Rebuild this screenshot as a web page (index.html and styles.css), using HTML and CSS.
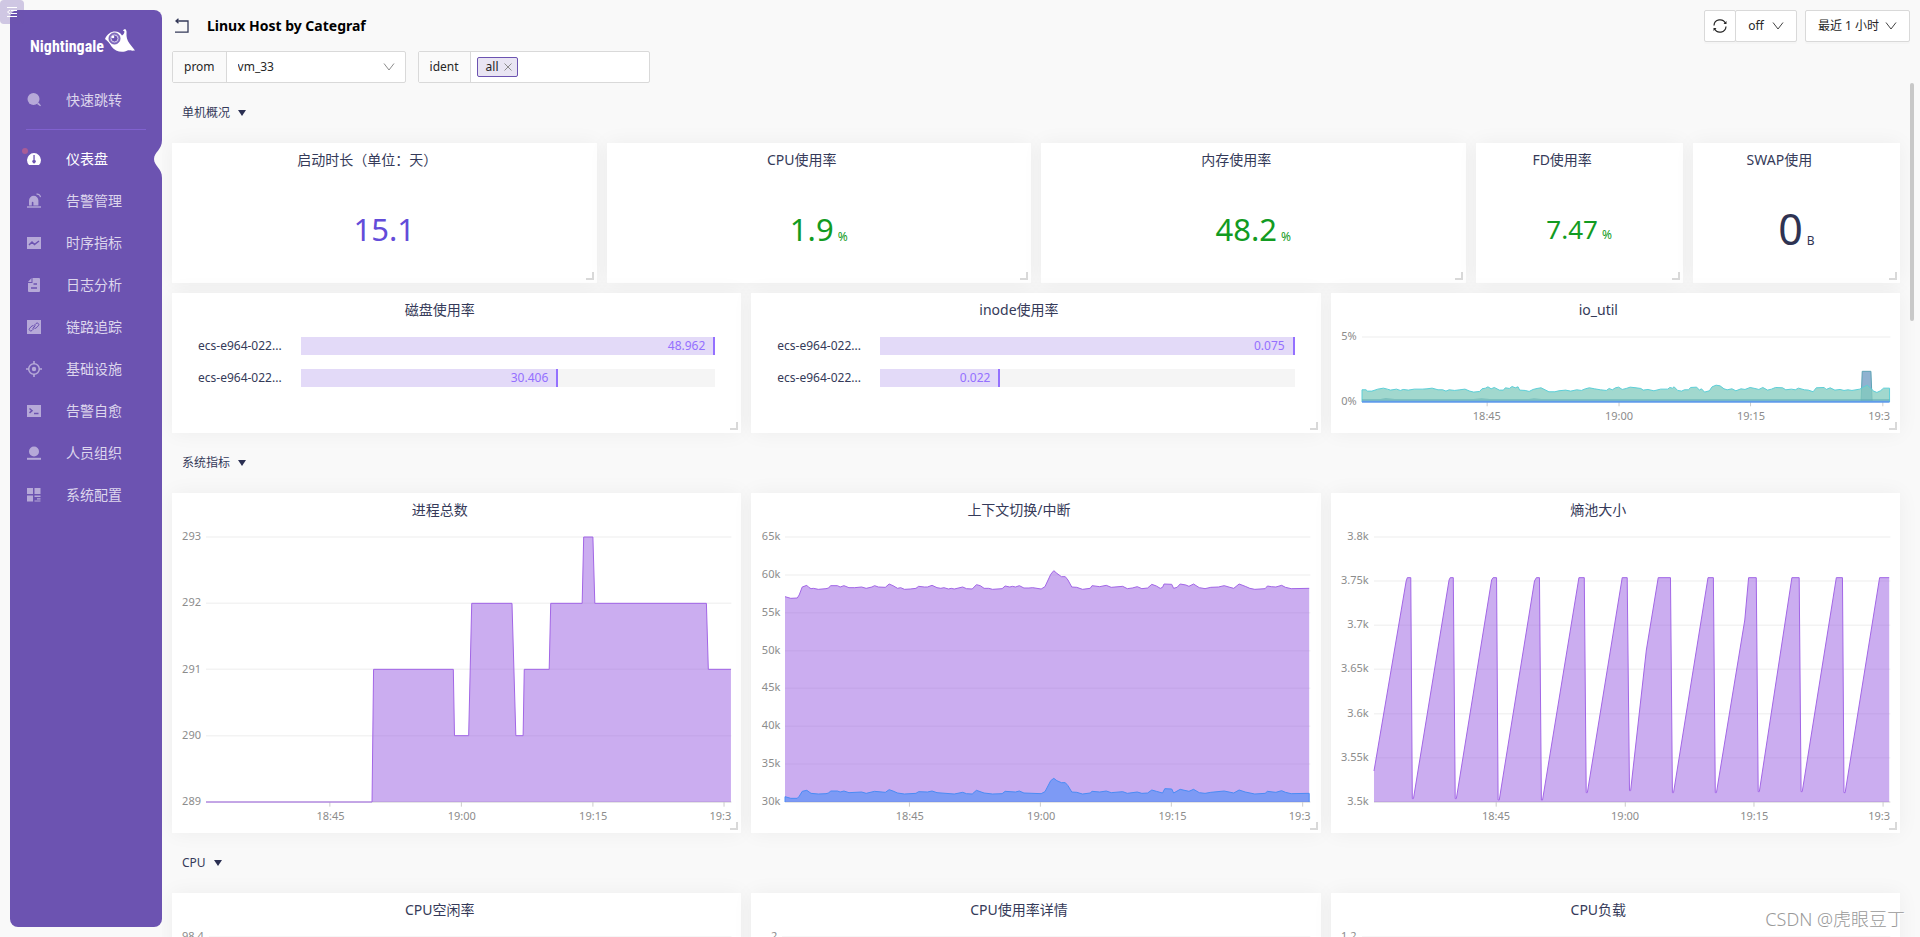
FILE: index.html
```html
<!DOCTYPE html>
<html lang="zh-CN">
<head>
<meta charset="utf-8">
<title>Linux Host by Categraf</title>
<link rel="stylesheet" href="styles.css">
</head>
<body>
<div class="app">
  <aside class="sidebar">
    <div class="logo">
      <span class="logo-text">Nightingale</span>
      <svg class="logo-bird" width="30" height="24" viewBox="0 0 30 24">
        <path fill="#fff" d="M0 10 C2 5 6 2.500 10 2.500 C13 2.500 15.500 4 17 6.500 C18.500 5.500 19.500 4 19.500 2.500 L17.800 1.200 L20 0 C21.500 1 21.800 2.500 21.500 4.500 C21.300 8 22 11 24.500 14.500 L30 21.500 C26 22 24 21 22.500 21.500 C18 24 10 23 6.500 17.500 C5 15 3 12 0 10Z"/>
        <circle cx="9.500" cy="9.500" r="5.500" fill="#8d7ac6" stroke="#6c53b1"/>
        <circle cx="9.500" cy="9.500" r="3.500" fill="#6c53b1" stroke="#d5cdeb"/>
        <circle cx="8" cy="8" r="1.300" fill="#fff"/>
      </svg>
    </div>
    <nav class="nav">
      <a class="nav-item" href="#search"><svg class="ico" viewBox="0 0 16 16"><circle cx="7.500" cy="7" r="6"/><path d="M11 12l1.500-1.500 2.500 3-.8.8z"/></svg>快速跳转</a>
      <hr class="nav-line">
      <a class="nav-item active" href="#dashboards"><svg class="ico" viewBox="0 0 16 16"><path fill-rule="evenodd" d="M3 14A7 7 0 1 1 13 14Z M7.400 4v5a1.700 1.700 0 1 0 1.300 0V4z"/></svg>仪表盘<i class="dot"></i>
        <svg class="notch" width="8" height="38" viewBox="0 0 8 38"><path d="M8 0C8 10 0 12 0 19S8 28 8 38Z"/></svg></a>
      <a class="nav-item" href="#alerts"><svg class="ico" viewBox="0 0 16 16"><path fill-rule="evenodd" d="M3 12.500V7.500a4.700 4.700 0 0 1 9.400 0V12.500H7.400V9.500a.8 .8 0 0 0-1.600 0V12.500z"/><path d="M1 13.300h14v1.400H1z"/><path d="M10.500 1.200c2-.4 3.700 1 4 3" fill="none" stroke="#fff" stroke-width="1.200"/></svg>告警管理</a>
      <a class="nav-item" href="#metrics"><svg class="ico" viewBox="0 0 16 16"><path d="M1 2h14v12H1z"/><path class="cut" d="M3 10l3-3 2.500 2.500L13 6"/></svg>时序指标</a>
      <a class="nav-item" href="#logs"><svg class="ico" viewBox="0 0 16 16"><path d="M6.500 1H13a1 1 0 0 1 1 1v12a1 1 0 0 1-1 1H3a1 1 0 0 1-1-1V6h4.500zM5.500 1v4H2z"/><path class="cut" d="M7.500 7H11M5 11h6"/></svg>日志分析</a>
      <a class="nav-item" href="#trace"><svg class="ico" viewBox="0 0 16 16"><path d="M1 1h14v14H1z"/><path class="cut thin" d="M7 7.500l3-3a1.600 1.600 0 0 1 2.300 2.300l-3 3M9 8.500l-3 3a1.600 1.600 0 0 1-2.300-2.300l3-3M6.500 9.500l3-3"/></svg>链路追踪</a>
      <a class="nav-item" href="#infra"><svg class="ico" viewBox="0 0 16 16"><circle cx="8" cy="8" r="5.300" fill="none" stroke="#fff" stroke-width="1.500"/><circle cx="8" cy="8" r="2.200"/><path d="M7.200 0h1.600v3H7.200zM7.200 13h1.600v3H7.200zM0 7.200h3v1.600H0zM13 7.200h3v1.600h-3z"/></svg>基础设施</a>
      <a class="nav-item" href="#healing"><svg class="ico" viewBox="0 0 16 16"><path d="M1 2h14v12H1z"/><path class="cut" d="M3.500 5.500l2.500 2.200-2.500 2.200M8 10.500h4.500"/></svg>告警自愈</a>
      <a class="nav-item" href="#users"><svg class="ico" viewBox="0 0 16 16"><circle cx="8" cy="6.500" r="5"/><path d="M1 12.800h14v2H1z"/></svg>人员组织</a>
      <a class="nav-item" href="#system"><svg class="ico" viewBox="0 0 16 16"><path d="M1 1h6v6H1zM8.500 1h6v6h-6zM1 8.500h6v6H1zM8.500 8.500h6V10h-6zM11 11.200h3.500v1.200H11zM8.500 13.400h6v1.200h-6z"/></svg>系统配置</a>
    </nav>
  </aside>
  <button class="collapse" aria-label="menu"><svg width="12" height="12" viewBox="0 0 12 12"><path d="M1 1.500h10M5 4.500h6M5 7.500h6M1 10.500h10M4 4L1.500 6 4 8" fill="none" stroke="#fff"/></svg></button>

  <main class="main">
    <header class="top">
      <button class="back" aria-label="返回"><svg width="16" height="16" viewBox="0 0 16 16"><path d="M2.500 3H14v11.200H1M4.500 .8L2 3l2.500 2.200" fill="none" stroke="#353a59" stroke-width="1.300"/></svg></button>
      <h1>Linux Host by Categraf</h1>
      <div class="btn-group">
        <button class="btn icon-btn" aria-label="刷新"><svg width="16" height="16" viewBox="0 0 16 16" fill="none" stroke="#262626" stroke-width="1.200"><path d="M2 7.500A6 6 0 0 1 13.500 5.500M14 8.500A6 6 0 0 1 2.500 10.500"/><path d="M14.500 3v3h-3zM1.500 13v-3h3z" fill="#262626" stroke="none"/></svg></button>
        <button class="btn">off<svg class="chev" viewBox="0 0 12 12"><path d="M1 2.500l5 6.500 5-6.500"/></svg></button>
      </div>
      <button class="btn range">最近 1 小时<svg class="chev" viewBox="0 0 12 12"><path d="M1 2.500l5 6.500 5-6.500"/></svg></button>
    </header>

    <form class="filters">
      <div class="field">
        <label for="prom">prom</label>
        <div class="control"><select id="prom"><option>vm_33</option></select><svg class="chev light" viewBox="0 0 12 12"><path d="M1 2.500l5 6.500 5-6.500"/></svg></div>
      </div>
      <div class="field">
        <label for="ident">ident</label>
        <div class="control tags"><span class="tag">all<button type="button" aria-label="移除"><svg width="8" height="8" viewBox="0 0 8 8"><path d="M.5 .5l7 7M7.500 .5l-7 7" stroke="#8c8c8c"/></svg></button></span><input id="ident" type="text"></div>
      </div>
    </form>

    <div class="scroll">
      <div class="grid">
        <button class="section">单机概况<i></i></button>

        <section class="card w6"><h2>启动时长（单位：天）</h2><div class="stat violet"><b>15.1</b></div></section>
        <section class="card w6"><h2>CPU使用率</h2><div class="stat green"><b>1.9</b><small>%</small></div></section>
        <section class="card w6"><h2>内存使用率</h2><div class="stat green"><b>48.2</b><small>%</small></div></section>
        <section class="card w3"><h2>FD使用率</h2><div class="stat green mid"><b>7.47</b><small>%</small></div></section>
        <section class="card w3"><h2>SWAP使用</h2><div class="stat big"><b>0</b><small>B</small></div></section>

        <section class="card w8"><h2>磁盘使用率</h2>
          <div class="bars">
            <span>ecs-e964-022...</span><div class="track"><div class="fill" style="width:100%">48.962</div></div>
            <span>ecs-e964-022...</span><div class="track"><div class="fill" style="width:62.1%">30.406</div></div>
          </div>
        </section>
        <section class="card w8"><h2>inode使用率</h2>
          <div class="bars">
            <span>ecs-e964-022...</span><div class="track"><div class="fill" style="width:100%">0.075</div></div>
            <span>ecs-e964-022...</span><div class="track"><div class="fill" style="width:29%">0.022</div></div>
          </div>
        </section>
        <section class="card w8"><h2>io_util</h2>
          <div class="chart y-xs">
            <div class="yaxis"><span>5%</span><span>0%</span></div>
            <svg class="plot" viewBox="158 171 1334 197" preserveAspectRatio="none">
              <path class="gridline" d="M158 171H1492"/>
              <path class="tick" d="M474 368v13M807 368v13M1139 368v13M1473 368v13"/>
              <path class="spike" d="M1418 368L1421 275H1443L1446 368"/>
              <path class="teal-area" d="M158 368V331L168 331L172 335L183 335L198 329L212 326L222 329L230 332L245 329L255 333L262 330L275 332L290 329L310 329L322 328L335 326L350 331L362 331L370 335L378 331L392 333L405 331L418 329L430 335L440 338L455 336L461 328L470 326L476 322L484 328L492 324L505 332L515 332L520 325L530 327L537 321L545 325L552 322L556 332L570 333L580 336L590 330L600 327L610 325L620 331L630 337L645 337L655 334L672 332L685 335L700 331L712 333L722 328L732 325L745 328L760 331L775 333L782 327L790 331L798 325L806 323L815 330L825 327L835 323L850 325L862 327L868 332L880 330L895 334L912 329L930 329L935 324L942 326L946 322L955 333L965 335L972 331L982 331L988 324L1003 323L1010 332L1015 328L1023 338L1035 334L1042 322L1052 317L1062 319L1072 328L1080 331L1092 328L1102 334L1115 328L1125 330L1138 324L1150 327L1160 330L1170 324L1182 332L1192 329L1202 324L1220 325L1228 331L1242 329L1252 331L1260 326L1275 331L1285 332L1297 337L1305 325L1325 324L1330 330L1340 325L1352 332L1365 330L1375 333L1385 331L1395 333L1415 329L1425 322L1434 317L1442 326L1450 335L1458 339L1467 334L1475 326L1490 326V368"/>
              <path class="teal-low" d="M158 368V359L205 359L218 356L240 359L440 359L460 357L480 359L580 359L592 357L610 359H1490V368"/>
              <path class="base-blue" d="M158 367H1490"/>
            </svg>
            <div class="xaxis"><i></i><span>18:45</span><span>19:00</span><span>19:15</span><span>19:3</span></div>
          </div>
        </section>

        <button class="section">系统指标<i></i></button>

        <section class="card tall w8"><h2>进程总数</h2>
          <div class="chart y-s">
            <div class="yaxis"><span>293</span><span>292</span><span>291</span><span>290</span><span>289</span></div>
            <svg class="plot" viewBox="122 171 1370 795" preserveAspectRatio="none">
              <path class="gridline" d="M122 171H1492M122 370H1492M122 568H1492M122 767H1492"/>
              <path class="axis" d="M122 966H1492"/><path class="tick" d="M445 966v14M788 966v14M1131 966v14M1473 966v14"/>
              <path class="violet-area" d="M122 966H555L559 568H767L770 767H807L815 370H920L930 767H949L952 568H1017L1021 370H1103L1107 171H1131L1136 370H1427L1432 568H1491V966"/>
              <path class="violet-line" d="M122 966H555L559 568H767L770 767H807L815 370H920L930 767H949L952 568H1017L1021 370H1103L1107 171H1131L1136 370H1427L1432 568H1491"/>
            </svg>
            <div class="xaxis"><i></i><span>18:45</span><span>19:00</span><span>19:15</span><span>19:3</span></div>
          </div>
        </section>
        <section class="card tall w8"><h2>上下文切换/中断</h2>
          <div class="chart y-s">
            <div class="yaxis"><span>65k</span><span>60k</span><span>55k</span><span>50k</span><span>45k</span><span>40k</span><span>35k</span><span>30k</span></div>
            <svg class="plot" viewBox="118 171 1372 795" preserveAspectRatio="none">
              <path class="gridline" d="M118 171H1490M118 285H1490M118 398H1490M118 512H1490M118 625H1490M118 739H1490M118 852H1490"/>
              <path class="axis" d="M118 966H1490"/><path class="tick" d="M443 966v14M785 966v14M1127 966v14M1470 966v14"/>
              <path class="violet-area" d="M118 966V350L133 355L150 354L155 345L163 321L175 316L180 322L186 326L192 325L205 328L225 326L232 324L237 317L255 317L262 321L272 317L285 323L300 323L318 321L330 325L345 321L352 317L362 321L380 322L390 312L400 317L412 325L420 323L430 328L445 327L460 325L467 319L482 321L490 321L502 316L515 323L525 325L533 323L545 327L552 325L560 327L582 321L592 326L607 327L618 314L628 317L638 325L650 325L660 328L685 326L693 318L705 321L712 319L720 321L730 317L742 324L755 324L765 323L787 327L797 320L812 283L820 272L828 280L840 290L850 290L857 300L867 321L880 322L895 328L915 325L920 317L940 320L957 316L970 322L1000 319L1012 326L1025 324L1038 320L1050 326L1065 324L1076 313L1088 318L1098 325L1104 322L1108 312L1128 313L1133 325L1142 322L1150 312L1165 315L1173 319L1185 312L1200 323L1215 326L1230 322L1250 321L1265 317L1280 322L1290 325L1304 312L1320 319L1332 325L1345 328L1372 326L1378 318L1388 320L1400 321L1415 316L1425 322L1440 326L1487 325V966"/>
              <path class="violet-line" d="M118 350L133 355L150 354L155 345L163 321L175 316L180 322L186 326L192 325L205 328L225 326L232 324L237 317L255 317L262 321L272 317L285 323L300 323L318 321L330 325L345 321L352 317L362 321L380 322L390 312L400 317L412 325L420 323L430 328L445 327L460 325L467 319L482 321L490 321L502 316L515 323L525 325L533 323L545 327L552 325L560 327L582 321L592 326L607 327L618 314L628 317L638 325L650 325L660 328L685 326L693 318L705 321L712 319L720 321L730 317L742 324L755 324L765 323L787 327L797 320L812 283L820 272L828 280L840 290L850 290L857 300L867 321L880 322L895 328L915 325L920 317L940 320L957 316L970 322L1000 319L1012 326L1025 324L1038 320L1050 326L1065 324L1076 313L1088 318L1098 325L1104 322L1108 312L1128 313L1133 325L1142 322L1150 312L1165 315L1173 319L1185 312L1200 323L1215 326L1230 322L1250 321L1265 317L1280 322L1290 325L1304 312L1320 319L1332 325L1345 328L1372 326L1378 318L1388 320L1400 321L1415 316L1425 322L1440 326L1487 325"/>
              <path class="blue-area" d="M118 966V950L133 955L150 955L155 949L163 934L175 931L186 940L205 942L225 941L232 939L237 933L255 933L262 936L272 933L285 938L318 936L330 940L352 934L380 937L390 929L400 933L412 939L430 942L460 940L467 935L490 936L502 933L515 938L560 942L582 937L592 941L607 942L618 931L638 939L660 942L685 941L693 934L720 936L730 933L742 939L787 941L797 935L812 902L820 895L828 902L840 908L850 908L857 917L867 936L880 937L895 942L915 939L920 934L940 936L957 933L970 938L1000 935L1012 940L1038 936L1050 940L1065 939L1076 930L1088 934L1104 939L1110 926L1128 927L1133 939L1150 928L1173 934L1185 928L1200 938L1215 940L1230 937L1265 933L1290 939L1304 930L1320 936L1345 942L1372 940L1378 934L1400 937L1415 932L1425 937L1440 941L1487 940V966"/>
            </svg>
            <div class="xaxis"><i></i><span>18:45</span><span>19:00</span><span>19:15</span><span>19:3</span></div>
          </div>
        </section>
        <section class="card tall w8"><h2>熵池大小</h2>
          <div class="chart y-m">
            <div class="yaxis"><span>3.8k</span><span>3.75k</span><span>3.7k</span><span>3.65k</span><span>3.6k</span><span>3.55k</span><span>3.5k</span></div>
            <svg class="plot" viewBox="142 171 1348 795" preserveAspectRatio="none">
              <path class="gridline" d="M142 171H1490M142 303H1490M142 436H1490M142 568H1490M142 701H1490M142 833H1490"/>
              <path class="axis" d="M142 966H1490"/><path class="tick" d="M461 966v14M798 966v14M1134 966v14M1471 966v14"/>
              <path class="violet-area" d="M142 966V873L226 303L229 293H238L242 956H245L338 300L341 293H349L354 956H357L449 300L453 293H462L466 960H469L561 303L566 293H574L579 960H582L677 293H691L696 938H699L790 293H803L809 932H812L853 510L884 293H916L921 938H924L1014 293H1028L1033 938H1036L1110 420L1120 293H1140L1145 935H1148L1233 293H1252L1257 935H1260L1349 293H1365L1369 938H1372L1462 293H1487V966"/>
              <path class="violet-line" d="M142 873L226 303L229 293H238L242 956H245L338 300L341 293H349L354 956H357L449 300L453 293H462L466 960H469L561 303L566 293H574L579 960H582L677 293H691L696 938H699L790 293H803L809 932H812L853 510L884 293H916L921 938H924L1014 293H1028L1033 938H1036L1110 420L1120 293H1140L1145 935H1148L1233 293H1252L1257 935H1260L1349 293H1365L1369 938H1372L1462 293H1487"/>
            </svg>
            <div class="xaxis"><i></i><span>18:45</span><span>19:00</span><span>19:15</span><span>19:3</span></div>
          </div>
        </section>

        <button class="section">CPU<i></i></button>

        <section class="card tall w8"><h2>CPU空闲率</h2>
          <div class="chart y-s"><div class="yaxis"><span>98.4</span></div><svg class="plot" viewBox="0 0 100 100" preserveAspectRatio="none"><path class="gridline" d="M0 0H100"/></svg></div>
        </section>
        <section class="card tall w8"><h2>CPU使用率详情</h2>
          <div class="chart y-xs"><div class="yaxis"><span>2</span></div><svg class="plot" viewBox="0 0 100 100" preserveAspectRatio="none"><path class="gridline" d="M0 0H100"/></svg></div>
        </section>
        <section class="card tall w8"><h2>CPU负载</h2>
          <div class="chart y-xs"><div class="yaxis"><span>1.2</span></div><svg class="plot" viewBox="0 0 100 100" preserveAspectRatio="none"><path class="gridline" d="M0 0H100"/></svg></div>
        </section>
      </div>
    </div>
    <div class="thumb"></div>
  </main>
  <div class="watermark">CSDN @虎眼豆丁</div>
</div>
</body>
</html>
```
FILE: styles.css
```css
* { box-sizing: border-box; }
body {
  margin: 0;
  background: #f9f9f9;
  color: #262626;
  font: 12px/20px "Noto Sans", "Noto Sans CJK SC", sans-serif;
}
button, input, select { font: inherit; color: inherit; margin: 0; padding: 0; border: 0; background: none; }
h1, h2 { margin: 0; }
.app { position: relative; display: flex; height: 100vh; overflow: hidden; }

/* sidebar */
.sidebar {
  flex: none;
  width: 152px;
  margin: 10px 0 10px 10px;
  border-radius: 8px;
  background: #6c53b1;
}
.logo { display: flex; align-items: flex-start; height: 69px; padding: 19px 0 0 20px; gap: 4px; color: #fff; }
.logo-text { width: 71px; padding-top: 6px; font: bold 16px/24px "Roboto Condensed", "Open Sans Condensed", "Liberation Sans Narrow", sans-serif; }
.logo-bird { flex: none; }
.nav-item {
  position: relative;
  display: flex;
  align-items: center;
  gap: 24px;
  height: 42px;
  padding-left: 16px;
  color: #ddd6ed;
  font-size: 14px;
  text-decoration: none;
}
.nav-item.active { color: #fff; }
.ico { width: 16px; height: 16px; fill: #fff; opacity: .5; }
.active .ico { opacity: 1; }
.cut { fill: none; stroke: #6c53b1; stroke-width: 1.5; }
.cut.thin { stroke-width: 1; }
.nav-line { height: 1px; margin: 8px 16px; border: 0; background: #8061cf; }
.dot { position: absolute; left: 12px; top: 10px; width: 6px; height: 6px; border-radius: 50%; background: #a95c97; }
.notch { position: absolute; right: 0; top: 2px; fill: #f9f9f9; }
.collapse {
  position: absolute;
  left: 0;
  top: 0;
  width: 24px;
  height: 24px;
  border-radius: 4px;
  background: rgba(108, 83, 177, .3);
  line-height: 0;
}

/* header */
.main { position: relative; flex: 1; min-width: 0; display: flex; flex-direction: column; }
.top { display: flex; align-items: center; padding: 10px 10px 0; height: 42px; }
.back { width: 20px; height: 20px; line-height: 0; }
h1 { flex: 1; margin-left: 15px; color: #000; font-size: 14px; font-weight: 700; line-height: 20px; }
.btn-group { display: flex; margin-right: 8px; }
.btn {
  display: flex;
  align-items: center;
  justify-content: center;
  gap: 8px;
  height: 32px;
  padding: 0 12px;
  border: 1px solid #d9d9d9;
  border-radius: 2px;
  background: #fff;
  box-shadow: 0 2px 0 rgba(0, 0, 0, .015);
}
.icon-btn { width: 32px; padding: 0; margin-right: -1px; }
.range { gap: 6px; }
.chev { flex: none; width: 12px; height: 12px; fill: none; stroke: #434343; }
.light { stroke: #8c8c8c; }

.filters { display: flex; gap: 12px; padding: 9px 10px 0; }
.field { display: flex; height: 32px; border: 1px solid #d9d9d9; border-radius: 2px; background: #fff; }
.field label { padding: 5px 11px; border-right: 1px solid #d9d9d9; background: #fafafa; }
.control { position: relative; width: 178px; height: 30px; }
.control select { width: 100%; height: 100%; padding: 0 11px; appearance: none; }
.control .chev { position: absolute; right: 10px; top: 9px; }
.tags { display: flex; align-items: center; gap: 4px; padding: 0 6px; }
.tags input { flex: 1; min-width: 0; outline: 0; }
.tag { display: flex; align-items: center; gap: 5px; height: 20px; padding: 0 5px 0 8px; border: 1px solid #6c53b1; border-radius: 2px; background: #e9e5f3; line-height: 18px; }
.tag button { line-height: 0; }

/* dashboard */
.scroll { flex: 1; min-height: 0; overflow: auto; scrollbar-width: none; padding: 10px 20px 10px 10px; }
.grid { display: grid; grid-template-columns: repeat(24, minmax(0, 1fr)); grid-auto-rows: 40px; gap: 10px; }
.section { grid-column: 1 / -1; display: flex; align-items: center; gap: 8px; padding: 0 10px; color: #353a59; }
.section i { border: 4px solid transparent; border-top: 6px solid #2b3052; border-bottom: 0; }
.card {
  position: relative;
  grid-row: span 3;
  display: flex;
  flex-direction: column;
  background: #fff;
  box-shadow: 0 0 20px rgba(0, 0, 0, .05);
}
.tall { grid-row: span 7; }
.w3 { grid-column: span 3; }
.w6 { grid-column: span 6; }
.w8 { grid-column: span 8; }
.card::after {
  content: "";
  position: absolute;
  right: 3px;
  bottom: 3px;
  width: 6px;
  height: 6px;
  border: solid #d9d9d9;
  border-width: 0 2px 2px 0;
}
h2 { height: 34px; padding-right: 34px; color: #353a59; font-size: 14px; font-weight: 400; line-height: 34px; text-align: center; }

.stat { flex: 1; display: flex; align-items: baseline; justify-content: center; gap: 4px; padding-top: 32px; line-height: 40px; color: #2f3352; }
.stat b { font-size: 31px; font-weight: 400; }
.stat small { font-size: 12px; }
.stat.mid b { font-size: 26px; }
.stat.big b { font-size: 43px; }
.stat.violet { color: #634cd9; }
.stat.green { color: #129b22; }

.bars { display: grid; grid-template-columns: 88px 1fr; gap: 14px 15px; padding: 10px 26px; color: #353a59; line-height: 18px; white-space: nowrap; }
.track { background: #f5f5f5; }
.fill { height: 18px; padding-right: 8px; border-right: 2px solid #9470ff; background: #e3daf8; color: #9470ff; text-align: right; }

.chart { flex: 1; min-height: 0; display: grid; grid-template-columns: auto minmax(0, 1fr); grid-template-rows: minmax(0, 1fr) 31px; column-gap: 5px; padding: 10px 10px 0; color: #8c8c8c; font-size: 11px; line-height: 12px; }
.yaxis { display: flex; flex-direction: column; justify-content: space-between; margin: -7px 0 -5px; text-align: right; }
.y-xs .yaxis { min-width: 16px; }
.y-s .yaxis { min-width: 19px; }
.y-m .yaxis { min-width: 28px; }
.plot { width: 100%; height: 100%; overflow: visible; }
.plot path { vector-effect: non-scaling-stroke; fill: none; stroke-width: 1; }
.xaxis { grid-column: 2; display: grid; grid-template-columns: 112fr 250fr 250fr 250fr 138fr; padding-top: 8px; text-align: center; }
.xaxis span:last-child { text-align: right; }
.plot .gridline { stroke: #f3f3f3; stroke-width: 1.5; }
.plot .axis, .plot .tick { stroke: #ccc; }
.plot .violet-area { fill: rgba(151, 91, 225, .5); }
.plot .violet-line { stroke: #a266e6; }
.plot .blue-area { fill: rgba(47, 135, 250, .5); stroke: #4a8cf5; }
.plot .spike { fill: #8fb2d0; stroke: #5ea3b5; }
.plot .teal-area { fill: rgba(130, 203, 190, .75); stroke: #5ccfd8; }
.plot .teal-low { fill: rgba(90, 170, 175, .5); }
.plot .base-blue { stroke: #5f9bea; stroke-width: 2; }

.thumb { position: absolute; right: 6px; top: 83px; width: 4px; height: 238px; border-radius: 2px; background: #c8c8c8; }
.watermark { position: absolute; right: 15px; bottom: 6px; color: #999; font-size: 18px; font-weight: 300; line-height: 24px; text-shadow: 1px 1px 0 #fff; }
```
